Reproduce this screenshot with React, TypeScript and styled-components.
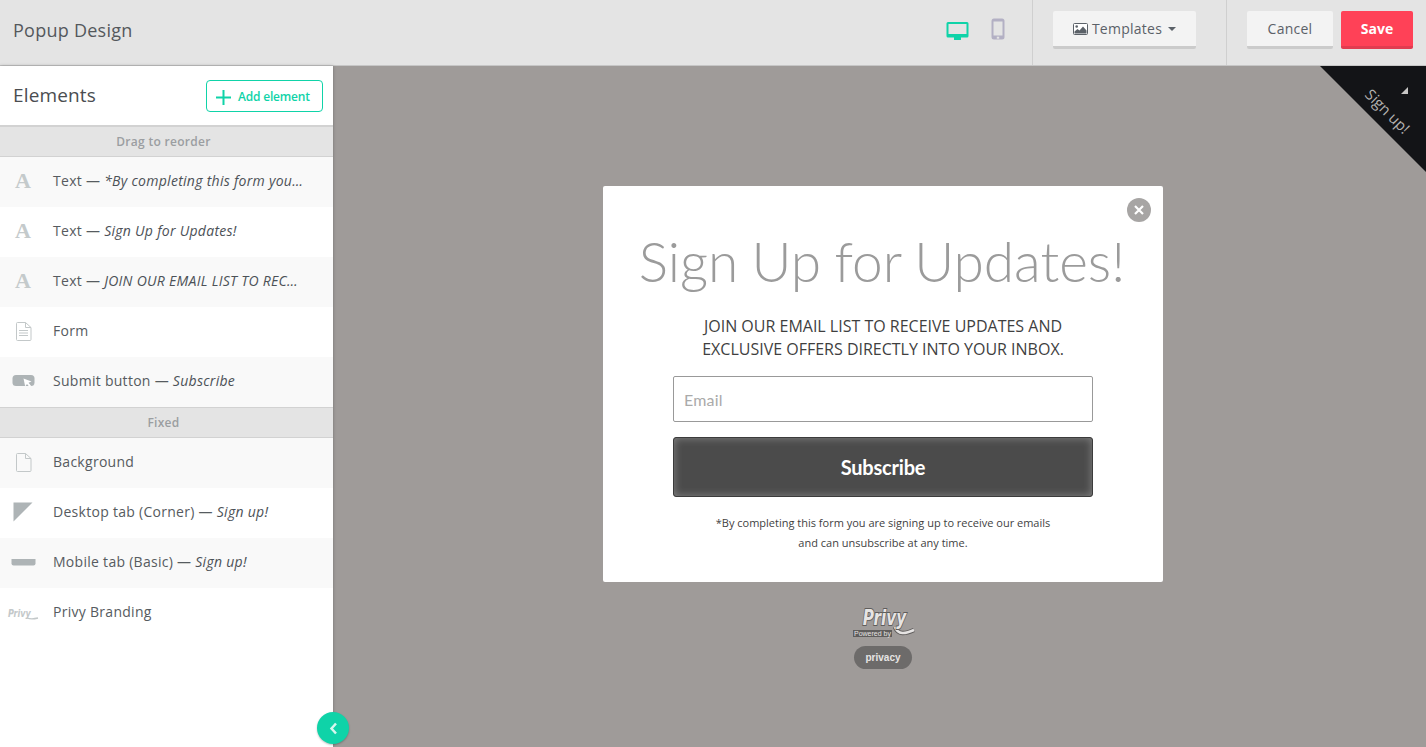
import { ReactNode } from 'react';
import styled, { createGlobalStyle } from 'styled-components';

const GlobalStyle = createGlobalStyle`
  html, body {
    margin: 0;
    padding: 0;
    height: 100%;
    overflow: hidden;
  }
  body {
    font-family: "Open Sans", "Liberation Sans", sans-serif;
    color: #4c5157;
  }
  * { box-sizing: border-box; }
`;

const ACCENT = '#0fd3a8';

const LetterIcon = () => <GlyphA>A</GlyphA>;

const FormIcon = () => (
  <svg width="17" height="19" viewBox="0 0 17 19" fill="none" stroke="#c3c8c9" strokeWidth="1">
    <path d="M1.500 1.500a1 1 0 0 1 1-1h8l5.500 5v12a1 1 0 0 1-1 1h-12.500a1 1 0 0 1-1-1z" />
    <path d="M10.500.5v5h5.500" />
    <path d="M4 8.500h9M4 11h9M4 13.500h9" />
  </svg>
);

const PageIcon = () => (
  <svg width="17" height="19" viewBox="0 0 17 19" fill="none" stroke="#c3c8c9" strokeWidth="1">
    <path d="M1.500 1.500a1 1 0 0 1 1-1h8l5.500 5v12a1 1 0 0 1-1 1h-12.500a1 1 0 0 1-1-1z" />
    <path d="M10.500.5v5h5.500" />
  </svg>
);

const ButtonIcon = () => (
  <svg width="23" height="14" viewBox="0 0 23 14">
    <rect x="0.500" y="1" width="22" height="11" rx="3.500" fill="#aeb4b6" />
    <path d="M11.500 4.500l8 3-3 1.300 2.500 3-1.500 1.200-2.500-3-1.800 2.500z" fill="#fff" />
  </svg>
);

const CornerIcon = () => (
  <svg width="20" height="20" viewBox="0 0 20 20">
    <path d="M.5.500h19L.5 19.500z" fill="#aeb4b6" />
  </svg>
);

const BarIcon = () => (
  <svg width="25" height="7" viewBox="0 0 25 7">
    <path d="M.5 0h24v4.500a2 2 0 0 1-2 2h-20a2 2 0 0 1-2-2z" fill="#aeb4b6" />
  </svg>
);

const PrivyMiniIcon = () => (
  <svg width="32" height="20" viewBox="0 0 32 20">
    <text
      x="1"
      y="10"
      fontFamily="'DejaVu Sans', sans-serif"
      fontStyle="italic"
      fontWeight="700"
      fontSize="9"
      fill="#c3c8c9"
      transform="translate(0 3) scale(.9 1.25)"
    >
      Privy
    </text>
    <path d="M20 16c4 1.500 7 1 11 0" stroke="#c3c8c9" strokeWidth="1.300" fill="none" />
  </svg>
);

type ElementRow = {
  icon: ReactNode;
  label: string;
  detail?: string;
};

const sortable: ElementRow[] = [
  { icon: <LetterIcon />, label: 'Text', detail: '*By completing this form you…' },
  { icon: <LetterIcon />, label: 'Text', detail: 'Sign Up for Updates!' },
  { icon: <LetterIcon />, label: 'Text', detail: 'JOIN OUR EMAIL LIST TO REC…' },
  { icon: <FormIcon />, label: 'Form' },
  { icon: <ButtonIcon />, label: 'Submit button', detail: 'Subscribe' },
];

const fixed: ElementRow[] = [
  { icon: <PageIcon />, label: 'Background' },
  { icon: <CornerIcon />, label: 'Desktop tab (Corner)', detail: 'Sign up!' },
  { icon: <BarIcon />, label: 'Mobile tab (Basic)', detail: 'Sign up!' },
  { icon: <PrivyMiniIcon />, label: 'Privy Branding' },
];

const drawRows = (rows: ElementRow[]) =>
  rows.map((row, i) => (
    <Row key={i} $shaded={i % 2 === 0}>
      <RowIcon>{row.icon}</RowIcon>
      <RowText>
        {row.label}
        {row.detail && (
          <>
            {' — '}
            <em>{row.detail}</em>
          </>
        )}
      </RowText>
    </Row>
  ));

function App() {
  return (
    <Page>
      <GlobalStyle />
      <TopBar>
        <PageTitle>Popup Design</PageTitle>
        <DeviceGroup>
          <svg width="23" height="18" viewBox="0 1 23 18">
            <path d="M2 1h19a1.500 1.500 0 0 1 1.500 1.500v12.500a1.500 1.500 0 0 1-1.500 1.500h-6v2.500h-7v-2.500h-6a1.500 1.500 0 0 1-1.500-1.500v-12.500a1.500 1.500 0 0 1 1.500-1.500z" fill={ACCENT} />
            <rect x="2.500" y="3" width="18" height="10" fill="#e4e4e4" />
          </svg>
          <svg width="14" height="22" viewBox="0 0 14 22">
            <rect x="0.500" y="0.500" width="13" height="21" rx="2.500" fill="#b3b0c4" />
            <rect x="2.500" y="3.500" width="9" height="14" fill="#e4e4e4" />
            <rect x="5.800" y="18.700" width="2.400" height="2" fill="#e4e4e4" />
          </svg>
        </DeviceGroup>
        <TemplatesGroup>
          <GreyButton>
            <svg width="15" height="12" viewBox="0 0 15 12">
              <rect x="0.500" y="0.500" width="14" height="11" rx="1" fill="#fff" stroke="#5b6168" />
              <circle cx="3.700" cy="3.500" r="1.300" fill="#5b6168" />
              <path d="M1.500 10.500v-2l3-2.500 2 1.500 3.500-4 3.500 4v3z" fill="#5b6168" />
            </svg>
            Templates
            <Caret />
          </GreyButton>
        </TemplatesGroup>
        <ActionGroup>
          <GreyButton $narrow>Cancel</GreyButton>
          <SaveButton>Save</SaveButton>
        </ActionGroup>
      </TopBar>
      <Main>
        <Sidebar>
          <SidebarHeader>
            <SidebarTitle>Elements</SidebarTitle>
            <AddButton>
              <svg width="15" height="15" viewBox="0 0 15 15">
                <path d="M7.500 0v15M0 7.500h15" stroke={ACCENT} strokeWidth="2" />
              </svg>
              Add element
            </AddButton>
          </SidebarHeader>
          <SectionLabel $top>Drag to reorder</SectionLabel>
          {drawRows(sortable)}
          <SectionLabel>Fixed</SectionLabel>
          {drawRows(fixed)}
          <CollapseToggle>
            <svg width="9" height="13" viewBox="0 0 9 13" fill="none">
              <path d="M7 1.500L2.500 6.500 7 11.500" stroke="#d6f7ee" strokeWidth="2.500" />
            </svg>
          </CollapseToggle>
        </Sidebar>
        <Canvas>
          <CornerTab>
            <CornerLabel>Sign up!</CornerLabel>
            <CornerArrow />
          </CornerTab>
          <Popup>
            <CloseButton>
              <svg width="10" height="10" viewBox="0 0 10 10">
                <path d="M1 1l8 8M9 1l-8 8" stroke="#fff" strokeWidth="2.200" />
              </svg>
            </CloseButton>
            <Headline>Sign Up for Updates!</Headline>
            <Intro>
              JOIN OUR EMAIL LIST TO RECEIVE UPDATES AND
              <br />
              EXCLUSIVE OFFERS DIRECTLY INTO YOUR INBOX.
            </Intro>
            <EmailBox>Email</EmailBox>
            <SubscribeButton>Subscribe</SubscribeButton>
            <FinePrint>
              *By completing this form you are signing up to receive our emails
              <br />
              and can unsubscribe at any time.
            </FinePrint>
          </Popup>
          <Branding>
            <BrandLogo>
              <svg width="64" height="32" viewBox="0 0 64 32">
                <path d="M44 22c3 8 10 7 19 3" stroke="#5f5d5c" strokeWidth="4.500" fill="none" />
                <path d="M44 22c3 8 10 7 19 3" stroke="#e6e4e3" strokeWidth="2.500" fill="none" />
                <text
                  x="12"
                  y="15"
                  fontFamily="'DejaVu Sans', sans-serif"
                  fontStyle="italic"
                  fontWeight="700"
                  fontSize="17"
                  fill="#e6e4e3"
                  stroke="#5f5d5c"
                  strokeWidth="1.500"
                  paintOrder="stroke"
                  transform="translate(1 1.250) scale(.9 1.25)"
                >
                  Privy
                </text>
              </svg>
              <PoweredBy>Powered by</PoweredBy>
            </BrandLogo>
            <PrivacyPill>privacy</PrivacyPill>
          </Branding>
        </Canvas>
      </Main>
    </Page>
  );
}

export default App;

const Page = styled.div`
  display: flex;
  flex-direction: column;
  width: 1426px;
  height: 747px;
  overflow: hidden;
`;

const TopBar = styled.header`
  display: flex;
  align-items: stretch;
  height: 66px;
  flex-shrink: 0;
  background: #e4e4e4;
  border-bottom: 1px solid #c6c6c6;
`;

const PageTitle = styled.h1`
  flex: 1;
  margin: 0;
  padding: 18px 0 0 13px;
  font-size: 18px;
  line-height: 25px;
  font-weight: 400;
  letter-spacing: 0.25px;
  color: #54585c;
`;

const DeviceGroup = styled.div`
  display: flex;
  align-items: flex-end;
  align-self: flex-start;
  gap: 22px;
  width: 86px;
  height: 40px;
  padding-top: 18px;
`;

const TemplatesGroup = styled.div`
  display: flex;
  justify-content: flex-start;
  width: 195px;
  padding: 11px 0 0 20px;
  border-left: 1px solid #cfcfcf;
  border-right: 1px solid #cfcfcf;
`;

const ActionGroup = styled.div`
  display: flex;
  gap: 8px;
  width: 199px;
  padding: 11px 0 0 20px;
`;

const GreyButton = styled.button<{ $narrow?: boolean }>`
  display: flex;
  align-items: center;
  justify-content: center;
  gap: 4px;
  width: ${(p) => (p.$narrow ? '86px' : '143px')};
  height: 38px;
  padding: 1px 0 0;
  background: #f3f3f3;
  border: 0;
  border-bottom: 3px solid #cbcbcb;
  border-radius: 2px;
  font: 400 14px/20px "Open Sans", sans-serif;
  letter-spacing: 0.25px;
  color: #5b6168;
`;

const Caret = styled.span`
  width: 0;
  height: 0;
  margin-left: 2px;
  border-left: 4px solid transparent;
  border-right: 4px solid transparent;
  border-top: 4px solid #5b6168;
`;

const SaveButton = styled.button`
  width: 72px;
  height: 38px;
  padding: 1px 0 0;
  background: #ff4157;
  border: 0;
  border-bottom: 3px solid #e13c50;
  border-radius: 2px;
  font: 700 14px/20px "Open Sans", sans-serif;
  color: #fff;
`;

const Main = styled.main`
  display: flex;
  flex: 1;
  min-height: 0;
`;

const Sidebar = styled.aside`
  position: relative;
  z-index: 1;
  width: 333px;
  flex-shrink: 0;
  background: #fff;
  box-shadow: 0 0 3px rgba(40, 40, 40, 0.35);
`;

const SidebarHeader = styled.div`
  display: flex;
  align-items: center;
  justify-content: space-between;
  height: 59px;
  padding: 0 10px 0 13px;
`;

const SidebarTitle = styled.h2`
  margin: 0;
  font-size: 19px;
  line-height: 27px;
  font-weight: 400;
  letter-spacing: 0.15px;
  color: #4a4d50;
`;

const AddButton = styled.button`
  display: flex;
  align-items: center;
  gap: 7px;
  width: 117px;
  height: 32px;
  margin-top: 1px;
  padding: 2px 0 0 9px;
  background: #fff;
  border: 1px solid ${ACCENT};
  border-radius: 4px;
  font: 600 12px/16px "Open Sans", sans-serif;
  letter-spacing: -0.2px;
  color: ${ACCENT};
`;

const SectionLabel = styled.div<{ $top?: boolean }>`
  height: ${(p) => (p.$top ? '32px' : '31px')};
  padding-right: 6px;
  background: #e4e4e4;
  border-top: ${(p) => (p.$top ? '2px solid #d2d2d2' : '1px solid #d2d2d2')};
  border-bottom: 1px solid #d2d2d2;
  font-size: 12px;
  line-height: 29px;
  font-weight: 600;
  letter-spacing: 0.3px;
  text-align: center;
  color: #9b9ea1;
`;

const Row = styled.div<{ $shaded: boolean }>`
  display: flex;
  align-items: center;
  height: 50px;
  padding-bottom: 2px;
  background: ${(p) => (p.$shaded ? '#f9f9f9' : '#fff')};
`;

const RowIcon = styled.div`
  display: flex;
  align-items: center;
  justify-content: center;
  width: 46px;
  flex-shrink: 0;
`;

const RowText = styled.div`
  padding-left: 7px;
  font-size: 14px;
  line-height: 20px;
  letter-spacing: 0.28px;
  color: #565b60;
  white-space: nowrap;

  em {
    font-style: italic;
    color: #4c5157;
  }
`;

const GlyphA = styled.span`
  font: 700 22px/22px "Liberation Serif", serif;
  color: #c4cacb;
`;

const CollapseToggle = styled.button`
  position: absolute;
  right: -16px;
  bottom: 3px;
  display: flex;
  align-items: center;
  justify-content: center;
  width: 32px;
  height: 32px;
  padding: 0;
  background: ${ACCENT};
  border: 0;
  border-radius: 50%;
  box-shadow: 0 1px 2px rgba(0, 0, 0, 0.25);
`;

const Canvas = styled.section`
  position: relative;
  display: flex;
  flex: 1;
  flex-direction: column;
  align-items: center;
  padding: 120px 0 0 7px;
  background: #9f9b99;
  overflow: hidden;
`;

const CornerTab = styled.div`
  position: absolute;
  top: 0;
  right: 0;
  width: 106px;
  height: 106px;
  background: #131417;
  clip-path: polygon(0 0, 100% 0, 100% 100%);
`;

const CornerLabel = styled.span`
  position: absolute;
  top: 36px;
  left: 38px;
  width: 60px;
  font-size: 15px;
  line-height: 18px;
  text-align: center;
  color: #b4b2b1;
  transform: rotate(45deg);
`;

const CornerArrow = styled.span`
  position: absolute;
  top: 21px;
  right: 18px;
  width: 0;
  height: 0;
  border-left: 7px solid transparent;
  border-bottom: 7px solid #c8c6c5;
`;

const Popup = styled.div`
  position: relative;
  display: flex;
  flex-direction: column;
  align-items: center;
  width: 560px;
  height: 396px;
  flex-shrink: 0;
  padding-top: 38px;
  background: #fff;
  border-radius: 2px;
`;

const CloseButton = styled.button`
  position: absolute;
  top: 12px;
  right: 12px;
  display: flex;
  align-items: center;
  justify-content: center;
  width: 24px;
  height: 24px;
  padding: 0;
  background: #a7a5a4;
  border: 0;
  border-radius: 50%;
`;

const Headline = styled.h3`
  margin: 0 0 0 -2px;
  font-family: Lato, "Open Sans", sans-serif;
  font-size: 55px;
  line-height: 74px;
  font-weight: 300;
  word-spacing: -1.7px;
  white-space: nowrap;
  color: #9b9b9b;
`;

const Intro = styled.p`
  margin: 17px 0 0;
  font-size: 16px;
  line-height: 23px;
  text-align: center;
  color: #3f3f3f;
`;

const EmailBox = styled.div`
  width: 420px;
  height: 46px;
  margin-top: 15px;
  padding: 0 10px;
  background: #fff;
  border: 1px solid #999;
  border-radius: 2px;
  font-family: Lato, "Open Sans", sans-serif;
  font-size: 16px;
  line-height: 46px;
  letter-spacing: 0.2px;
  color: #aaa;
`;

const SubscribeButton = styled.button`
  width: 420px;
  height: 60px;
  margin-top: 15px;
  padding: 0;
  background: #4b4b4b;
  border: 1px solid #3c3c3c;
  border-radius: 3px;
  box-shadow: inset 0 0 8px rgba(255, 255, 255, 0.32);
  font: 700 20px/28px Lato, "Open Sans", sans-serif;
  letter-spacing: -0.2px;
  color: #fff;
`;

const FinePrint = styled.p`
  margin: 16px 0 0;
  font-size: 11px;
  line-height: 20px;
  text-align: center;
  color: #3f3f3f;
`;

const Branding = styled.div`
  display: flex;
  flex-direction: column;
  align-items: center;
  margin-top: 23px;
`;

const BrandLogo = styled.div`
  position: relative;
  width: 64px;
  height: 32px;
`;

const PoweredBy = styled.span`
  position: absolute;
  left: 2px;
  bottom: 0;
  padding: 0 1px;
  background: #5f5d5c;
  font: 400 7px/7px "Liberation Sans", sans-serif;
  white-space: nowrap;
  color: #e6e4e3;
`;

const PrivacyPill = styled.div`
  width: 58px;
  height: 23px;
  margin-top: 9px;
  background: #6d6b6a;
  border-radius: 12px;
  font: 700 10px/23px "Liberation Sans", sans-serif;
  text-align: center;
  color: #e6e4e3;
`;
